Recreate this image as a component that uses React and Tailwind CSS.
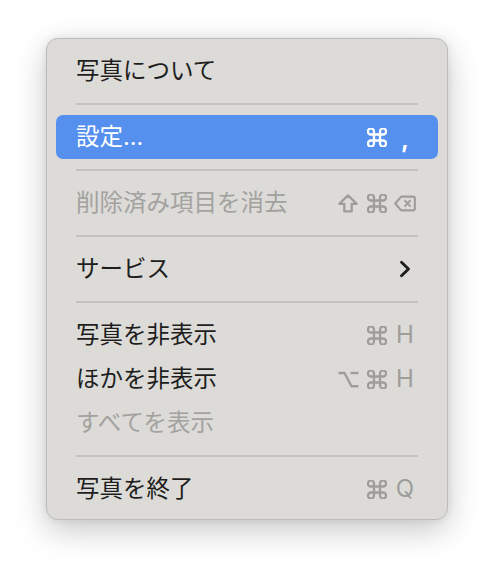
import React from "react";

const JP = { fontFamily: '"Noto Sans CJK JP", "Noto Sans", sans-serif' };

function Cmd({ color }) {
  return (
    <svg width="20" height="19" viewBox="2.6 2.6 18.8 18.8" fill="none" stroke={color} strokeWidth="2.3" strokeLinecap="round" strokeLinejoin="round">
      <path d="M15 6v12a3 3 0 1 0 3-3H6a3 3 0 1 0 3 3V6a3 3 0 1 0-3 3h12a3 3 0 1 0-3-3" />
    </svg>
  );
}

function Shift({ color }) {
  return (
    <svg width="20" height="19" viewBox="0 0 20 19" fill="none" stroke={color} strokeWidth="2.3" strokeLinejoin="round">
      <path d="M10 1.4 L18.6 9.8 H13.7 V17.4 H6.3 V9.8 H1.4 Z" />
    </svg>
  );
}

function Opt({ color }) {
  return (
    <svg width="21" height="17" viewBox="0 0 21 17" fill="none" stroke={color} strokeWidth="2.4" strokeLinecap="butt" strokeLinejoin="round">
      <path d="M0.5 2 H6.5 L13.5 15.2 H20.5" />
      <path d="M12.5 2 H20.5" />
    </svg>
  );
}

function Del({ color }) {
  return (
    <svg width="23" height="17" viewBox="0 0 23 17" fill="none" stroke={color} strokeWidth="2.2" strokeLinejoin="round" strokeLinecap="round">
      <path d="M7.5 1.3 H20 a1.8 1.8 0 0 1 1.8 1.8 V13.9 a1.8 1.8 0 0 1 -1.8 1.8 H7.5 L1.3 8.5 Z" />
      <path d="M11.6 5.6 L16.8 11.2 M16.8 5.6 L11.6 11.2" strokeWidth="2" />
    </svg>
  );
}

function Chevron() {
  return (
    <svg width="12" height="18" viewBox="0 0 12 18" fill="none" stroke="#1f1f1f" strokeWidth="2.9" strokeLinecap="round" strokeLinejoin="round">
      <path d="M2.5 2.2 L9.5 9 L2.5 15.8" />
    </svg>
  );
}

const GRAY = "#9e9d9a";

function Shortcut({ mod1, cmd = true, keyEl, color = GRAY }) {
  return (
    <div className="flex items-center">
      <div className="w-[24px] flex justify-center">{mod1}</div>
      <div className="ml-[7px] w-[20px] flex justify-center">{cmd ? <Cmd color={color} /> : null}</div>
      <div className="ml-[7px] w-[22px] flex justify-center">{keyEl}</div>
    </div>
  );
}

function KeyText({ children, white }) {
  return (
    <span
      className={`text-[24px] leading-none ${white ? "text-white font-bold translate-y-[3px]" : "text-[#9e9d9a]"}`}
      style={{ fontFamily: '"Inter", "Liberation Sans", sans-serif' }}
    >
      {children}
    </span>
  );
}

function Item({ label, disabled, highlighted, right }) {
  return (
    <div
      className={`h-[44px] flex items-center justify-between pl-[20px] pr-[22px] rounded-[7px] ${
        highlighted ? "bg-[#5590ee]" : ""
      }`}
    >
      <span
        className={`text-[23.5px] leading-none font-normal ${
          highlighted ? "text-white" : disabled ? "text-[#a3a2a0]" : "text-[#1e1e1d]"
        }`}
        style={{ fontFamily: '"Inter", "Noto Sans CJK JP", sans-serif' }}
      >
        {label}
      </span>
      {right}
    </div>
  );
}

function Sep() {
  return (
    <div className="h-[22px] flex items-center px-[20px]">
      <div className="h-[2px] w-full bg-[#c3c2bf]" />
    </div>
  );
}

export default function App() {
  return (
    <div className="w-[494px] h-[574px] bg-white overflow-hidden" style={JP}>
      <div className="ml-[46px] mt-[38px] w-[402px] h-[482px] rounded-[12px] bg-[#dcdbd8] border border-[#bdbcba] shadow-[0_10px_32px_rgba(0,0,0,0.22),0_0_8px_rgba(0,0,0,0.08)] px-[9px] pt-[10px] pb-[8px] flex flex-col">
        <Item label="写真について" />
        <Sep />
        <Item
          label="設定…"
          highlighted
          right={
            <Shortcut
              mod1={null}
              color="#ffffff"
              keyEl={<KeyText white>,</KeyText>}
            />
          }
        />
        <Sep />
        <Item
          label="削除済み項目を消去"
          disabled
          right={<Shortcut mod1={<Shift color={GRAY} />} keyEl={<Del color={GRAY} />} />}
        />
        <Sep />
        <Item
          label="サービス"
          right={
            <div className="w-[22px] flex justify-center">
              <Chevron />
            </div>
          }
        />
        <Sep />
        <Item label="写真を非表示" right={<Shortcut mod1={null} keyEl={<KeyText>H</KeyText>} />} />
        <Item
          label="ほかを非表示"
          right={<Shortcut mod1={<Opt color={GRAY} />} keyEl={<KeyText>H</KeyText>} />}
        />
        <Item label="すべてを表示" disabled />
        <Sep />
        <Item label="写真を終了" right={<Shortcut mod1={null} keyEl={<KeyText>Q</KeyText>} />} />
      </div>
    </div>
  );
}
